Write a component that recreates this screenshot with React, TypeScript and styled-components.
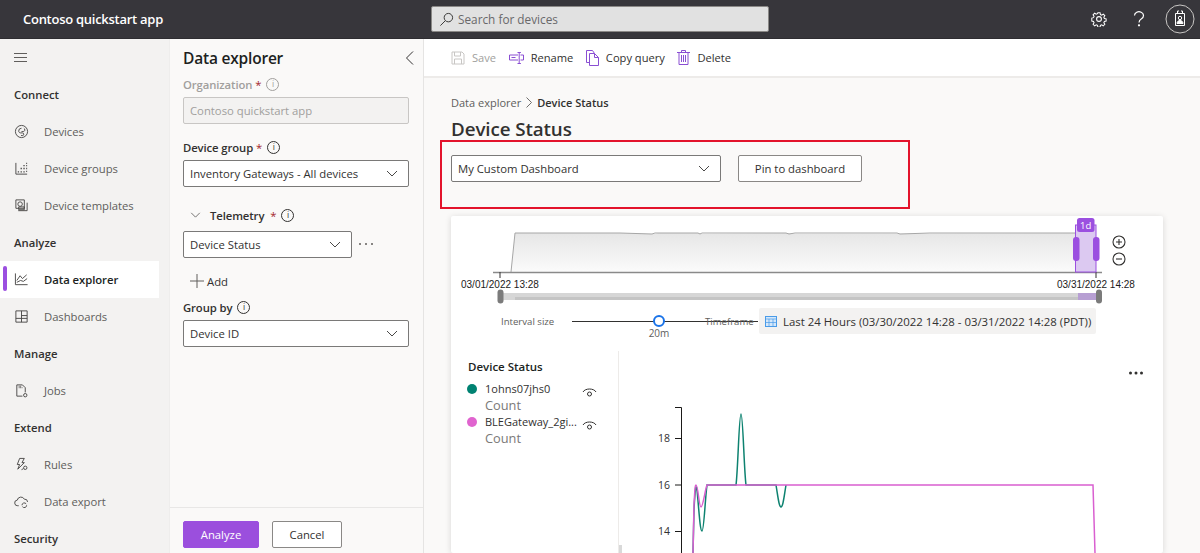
import React from "react";
import styled, { createGlobalStyle } from "styled-components";

const Global = createGlobalStyle`
  html, body { margin: 0; padding: 0; height: 553px; overflow: hidden; background: #faf9f8; }
  body { font-family: "Open Sans", "Noto Sans", "Liberation Sans", sans-serif; color: #323130; }
  * { box-sizing: border-box; }
`;

const Page = styled.div`
  width: 1200px; height: 553px; display: flex; flex-direction: column; overflow: hidden; position: relative;
`;
const Header = styled.header`
  height: 39px; flex: none; background: #37363b; display: flex; align-items: center; position: relative;
  border-bottom: 1px solid #2e2d31;
`;
const Brand = styled.div`
  width: 431px; padding-left: 23px; color: #fff; font-size: 13px; font-weight: 600; letter-spacing: -0.27px;
`;
const SearchBox = styled.div`
  width: 338px; height: 26px; background: #e1e1e1; border: 1px solid #8a8886; border-radius: 2px;
  display: flex; align-items: center; gap: 4px; padding-left: 7px; font-size: 11.8px; color: #69686a;
`;
const HeaderIcons = styled.div`
  margin-left: auto; display: flex; align-items: center; color: #fff; padding-right: 5px;
`;
const HeaderIcon = styled.span<{ $w: number }>`
  width: ${p => p.$w}px; display: flex; justify-content: center; align-items: center;
`;
const Body = styled.div`
  flex: 1; display: flex; min-height: 0;
`;
const Sidebar = styled.nav`
  width: 170px; flex: none; background: #f3f2f1; border-right: 1px solid #eeedec;
`;
const Hamburger = styled.div`
  height: 37px; padding-left: 14px; display: flex; align-items: center; color: #605e5c;
`;
const GroupTitle = styled.div`
  height: 37px; padding-left: 14px; display: flex; align-items: center; font-size: 11.3px; font-weight: 600; color: #323130;
`;
const NavRow = styled.div<{ $active?: boolean }>`
  height: 37px; width: 159px; display: flex; align-items: center; position: relative; padding-left: 14px; gap: 15px;
  font-size: 11.3px; letter-spacing: -0.05px; background: ${p => (p.$active ? "#fff" : "transparent")};
  color: ${p => (p.$active ? "#201f1e" : "#605e5c")}; font-weight: ${p => (p.$active ? 600 : 400)};
  &::before {
    content: ""; display: ${p => (p.$active ? "block" : "none")}; position: absolute; left: 3px; top: 5px; width: 4px; height: 25px;
    border-radius: 2px; background: #9b4fe0;
  }
`;
const NavIcon = styled.span`
  width: 15px; height: 15px; display: flex; color: #4a4948; flex: none;
`;
const Panel = styled.aside`
  width: 254px; flex: none; background: #faf9f8; border-right: 1px solid #e5e4e3; display: flex; flex-direction: column;
  padding-top: 6px;
`;
const PanelHead = styled.div`
  height: 26px; padding: 0 9px 0 13px; display: flex; justify-content: space-between; align-items: center;
  font-size: 15.5px; font-weight: 600; color: #201f1e; letter-spacing: -0.2px;
`;
const FieldLabel = styled.div<{ $top: number; $disabled?: boolean; $indent?: number }>`
  height: 16px; padding-bottom: 2px; margin-top: ${p => p.$top}px; margin-left: ${p => p.$indent ?? 13}px; display: flex; align-items: center; gap: 3px;
  font-size: 11.3px; font-weight: 600; letter-spacing: -0.1px; color: ${p => (p.$disabled ? "#a19f9d" : "#323130")};
`;
const Req = styled.span`
  color: #a4262c; font-weight: 400;
`;
const Info = styled.span<{ $disabled?: boolean }>`
  width: 13px; height: 13px; border-radius: 50%; border: 1px solid ${p => (p.$disabled ? "#a19f9d" : "#323130")};
  font-size: 8.5px; font-weight: 400; display: inline-flex; align-items: center; justify-content: center; margin-left: 2px;
  line-height: 1;
`;
const InputBox = styled.div`
  width: 226px; height: 27px; margin: 4px 0 0 13px; background: #f3f2f1; border: 1px solid #c8c6c4; border-radius: 2px;
  display: flex; align-items: center; padding-left: 6px; font-size: 11.3px; color: #a19f9d;
`;
const Select = styled.div<{ $w?: number; $mt?: number; $ml?: number }>`
  width: ${p => p.$w ?? 226}px; height: 27px; flex: none; margin: ${p => p.$mt ?? 4}px 0 0 ${p => p.$ml ?? 13}px; background: #fff;
  border: 1px solid #7a7978; border-radius: 2px; display: flex; align-items: center; justify-content: space-between;
  padding: 0 10px 0 6px; font-size: 11.3px; color: #323130;
`;
const TelemetrySelectRow = styled.div`
  display: flex; align-items: center; margin-top: 7px;
`;
const Dots = styled.span`
  margin-left: 7px; margin-top: -1px; width: 14px; display: flex; justify-content: space-between; color: #605e5c;
  & > i { width: 2px; height: 2px; background: currentColor; border-radius: 50%; }
`;
const AddRow = styled.div`
  height: 16px; margin: 15px 0 0 20px; display: flex; align-items: center; gap: 3px; font-size: 11.3px; color: #323130;
`;
const PanelFooter = styled.div`
  margin-top: auto; border-top: 1px solid #e8e7e6; padding: 13px 0 5px 13px; display: flex; gap: 13px;
`;
const Button = styled.button<{ $primary?: boolean; $w: number }>`
  width: ${p => p.$w}px; height: 27px; font: inherit; font-size: 11.3px; border-radius: 2px; padding: 0;
  border: 1px solid ${p => (p.$primary ? "#9b4fe0" : "#8a8886")}; background: ${p => (p.$primary ? "#9b4fdd" : "#fff")};
  color: ${p => (p.$primary ? "#fff" : "#323130")};
`;
const Main = styled.main`
  flex: 1; min-width: 0; display: flex; flex-direction: column; position: relative; background: #faf9f8;
`;
const Toolbar = styled.div`
  height: 39px; flex: none; background: #fff; border-bottom: 2px solid #edebe9; display: flex; align-items: center; padding-left: 27px; gap: 12.5px;
`;
const ToolItem = styled.span<{ $disabled?: boolean }>`
  display: flex; align-items: center; gap: 7px; font-size: 11.15px; color: ${p => (p.$disabled ? "#a19f9d" : "#323130")};
`;
const Content = styled.div`
  flex: 1; min-height: 0; padding: 17px 0 0 27px; display: flex; flex-direction: column;
`;
const Crumbs = styled.div`
  height: 16px; padding-bottom: 1px; display: flex; align-items: center; gap: 5px; font-size: 11px; color: #605e5c;
  & > b { color: #323130; font-weight: 600; }
`;
const PageTitle = styled.h1`
  margin: 4px 0 0; height: 28px; line-height: 28px; font-size: 18.8px; font-weight: 600; color: #323130; letter-spacing: -0.1px;
`;
const PinRow = styled.div`
  margin-top: 12px; display: flex; gap: 17px;
`;
const PinButton = styled.button`
  width: 124px; height: 27px; background: #fff; border: 1px solid #8a8886; border-radius: 2px; font: inherit; font-size: 11.3px; color: #323130; padding: 0;
`;
const Highlight = styled.div`
  position: absolute; left: 16px; top: 101px; width: 470px; height: 69px; border: 2px solid #e3132c; pointer-events: none;
`;
const Card = styled.section`
  margin-top: 34px; width: 712px; flex: 1; min-height: 0; background: #fff; box-shadow: 0 1px 6px rgba(0,0,0,.14); border-radius: 2px;
  display: flex; flex-direction: column; overflow: hidden;
`;
const Timeline = styled.svg`
  width: 712px; height: 92px; display: block; flex: none;
`;
const IntervalRow = styled.div`
  height: 26px; flex: none; display: flex; align-items: center; padding-left: 50px; font-size: 9.6px; color: #605e5c;
`;
const IntervalLabel = styled.span`
  width: 71px; flex: none;
`;
const SliderTrack = styled.div`
  width: 186px; height: 26px; flex: none; position: relative;
  &::before { content: ""; position: absolute; left: 0; right: 0; top: 13px; height: 1px; background: #323130; }
`;
const Thumb = styled.span`
  position: absolute; left: 81px; top: 7px; width: 12px; height: 12px; border-radius: 50%; background: #fff; border: 2px solid #1a73e8;
`;
const ThumbValue = styled.span`
  position: absolute; left: 76px; top: 18px; width: 22px; text-align: center; font-size: 10px; color: #605e5c;
`;
const TimeLabel = styled.span`
  margin-left: -53px; width: 54px; flex: none; position: relative;
`;
const Chip = styled.div`
  width: 337px; height: 26px; background: #f3f2f1; border-radius: 2px; display: flex; align-items: center; gap: 6px; padding-left: 6px;
  font-size: 11.4px; color: #323130; white-space: nowrap;
`;
const ChartRow = styled.div`
  flex: 1; min-height: 0; margin-top: 17px; display: flex;
`;
const Legend = styled.div`
  width: 168px; flex: none; border-right: 1px solid #edebe9; padding-top: 8px;
`;
const LegendTitle = styled.div`
  height: 16px; line-height: 16px; margin-left: 17px; font-size: 11.5px; font-weight: 600; color: #201f1e;
`;
const LegendItem = styled.div`
  margin-left: 16px; height: 33px; display: flex; align-items: flex-start; padding-top: 6px;
  &:first-of-type { margin-top: 0; }
`;
const Dot = styled.span<{ $c: string }>`
  width: 10px; height: 10px; border-radius: 50%; background: ${p => p.$c}; margin-top: 3px; flex: none;
`;
const LegendText = styled.div`
  width: 97px; margin-left: 8px; flex: none; font-size: 11px; line-height: 16px; color: #323130; white-space: nowrap;
  & > small { display: block; font-size: 12.8px; color: #7a7978; line-height: 17px; }
`;
const Eye = styled.svg`
  width: 15px; height: 11px; margin-top: 6px; flex: none;
`;
const Plot = styled.svg`
  width: 543px; height: 202px; display: block; flex: none;
`;
const Tick = styled.text`
  font-family: "Liberation Sans", Arial, sans-serif; font-size: 10px; fill: #1b1a19;
`;
const AxisText = styled.text`
  font-family: "Open Sans", sans-serif; font-size: 10.5px; fill: #323130;
`;
const BadgeText = styled.text`
  font-family: "Open Sans", sans-serif; font-size: 9.5px; fill: #fff;
`;

const I = ({ children, s = 15 }: { children: React.ReactNode; s?: number }) => (
  <svg width={s} height={s} viewBox="0 0 16 16" fill="none" stroke="currentColor" strokeWidth="1">{children}</svg>
);
const Chev = ({ w = 12 }: { w?: number }) => (
  <svg width={w} height="7" viewBox="0 0 12 7" fill="none" stroke="#4a4948" strokeWidth="1"><path d="M1 1l5 5 5-5" /></svg>
);

const icons = {
  devices: <I><circle cx="8" cy="8" r="6.5" /><path d="M8 4.5a3 3 0 0 0-3 3c0 1.2 1 2 2 2h2a1.4 1.4 0 0 1 0 2.8H7.5M10.5 4.5a2 2 0 0 1 1 2c0 1-.8 1.5-2 1.5H8" /></I>,
  groups: <I><path d="M2 2v12h12" /><path d="M4 11.5h1.4M7 11.5h1.4M10 11.5h1.4M13 2.5h1M13 5h1M13 8h1M13 11h1M10 8h1.4M10 5h1.4M7 8h1.4" strokeWidth="1.4" /></I>,
  templates: <I><path d="M2 11V2h9v9z" /><path d="M4.5 13.5H14V5" /><circle cx="6.5" cy="6.5" r="2.4" /><path d="M5 9.5h6v3H5z" /></I>,
  explorer: <I><path d="M1.5 1.5v12h13" /><path d="M3 9l3.5-5 2.5 3 4.5-4" /><path d="M3 11l4-2 3 1 4-3" /></I>,
  dashboards: <I><path d="M2 2h12v12H2zM2 10h12M8 2v12M8 7h6" /></I>,
  jobs: <I><path d="M3 14V2h6l3 3v5M3 14h6" /><path d="M5 3.5h3M5 5h4" strokeDasharray="1 .6" /><circle cx="12" cy="13" r="1.8" /></I>,
  rules: <I><path d="M6 1.5h5L8.5 6H11l-7 7 2-5H3.5z" /><circle cx="12" cy="11.5" r="1.8" /><path d="M8 13.5l2-1" /></I>,
  exportI: <I><path d="M5 12.5H4a3 3 0 0 1-.5-6 4 4 0 0 1 7.5-1 3.2 3.2 0 0 1 3.5 3" /><path d="M8.5 12a2.5 2.5 0 0 1 4.5-1.5M13.5 12A2.5 2.5 0 0 1 9 13.5" /></I>,
};

const Nav = ({ icon, children, active }: { icon: React.ReactNode; children: React.ReactNode; active?: boolean }) => (
  <NavRow $active={active}><NavIcon>{icon}</NavIcon><span>{children}</span></NavRow>
);

const Purple = "#8a4fd3";

const green = "M693 553 L694 510 C695 490 696 482 697 490 C699 510 700 531 702 531 C704 531 705 500 707 485 L736 485 C738 470 739 414 741 414 C743 414 744 470 746 485 L776 485 C778 497 779 507 781 507 C783 507 784 497 786 485";
const pink = "M693 553 L694 505 C695 488 695 485 696 485 C698 485 699 507 701 507 C703 507 705 490 707 485 L1093 485 L1095 553";

export default function App() {
  return (
    <Page>
      <Global />
      <Header>
        <Brand>Contoso quickstart app</Brand>
        <SearchBox>
          <svg width="15" height="15" viewBox="0 0 16 16" fill="none" stroke="#323130" strokeWidth="1"><circle cx="10" cy="6" r="4.5" /><path d="M6.7 9.3L1.5 14.5" /></svg>
          Search for devices
        </SearchBox>
        <HeaderIcons>
          <HeaderIcon $w={28}>
            <svg width="16" height="16" viewBox="0 0 16 16" fill="none" stroke="#fff" strokeWidth="1.1"><circle cx="8" cy="8" r="2.4" /><path d="M6.8 1.2h2.4l.4 2 1.4.6 1.7-1.1 1.7 1.7-1.1 1.7.6 1.4 1.9.4v2.4l-1.9.4-.6 1.4 1.1 1.7-1.7 1.7-1.7-1.1-1.4.6-.4 1.9H6.8l-.4-1.9-1.4-.6-1.7 1.1-1.7-1.7 1.1-1.7-.6-1.4-1.9-.4V7l1.9-.4.6-1.4-1.1-1.7 1.7-1.7L5 2.9l1.4-.6z" transform="translate(.6 .6) scale(.92)" /></svg>
          </HeaderIcon>
          <HeaderIcon $w={52}>
            <svg width="12" height="16" viewBox="0 0 12 16" fill="none" stroke="#fff" strokeWidth="1.2"><path d="M1.5 4.5a4.5 3.8 0 1 1 7 3.2c-1.6 1-2.5 1.6-2.5 3.8" /><circle cx="6" cy="14.3" r=".5" fill="#fff" /></svg>
          </HeaderIcon>
          <HeaderIcon $w={30}>
            <svg width="30" height="30" viewBox="0 0 30 30" fill="none" stroke="#fff" strokeWidth="1"><circle cx="15" cy="15" r="14" stroke="#c8c6c4" /><path d="M10.5 9.5h9v12h-9z" /><path d="M12.5 9.5V7h1.5M17.5 9.5V7H16" /><circle cx="15" cy="14" r="1.7" /><path d="M12 19.5c0-2 1.5-3 3-3s3 1 3 3z" fill="#fff" /></svg>
          </HeaderIcon>
        </HeaderIcons>
      </Header>
      <Body>
        <Sidebar>
          <Hamburger>
            <svg width="13" height="9" viewBox="0 0 13 9" stroke="#605e5c" strokeWidth="1"><path d="M0 .5h13M0 4.5h13M0 8.5h13" /></svg>
          </Hamburger>
          <GroupTitle>Connect</GroupTitle>
          <Nav icon={icons.devices}>Devices</Nav>
          <Nav icon={icons.groups}>Device groups</Nav>
          <Nav icon={icons.templates}>Device templates</Nav>
          <GroupTitle>Analyze</GroupTitle>
          <Nav icon={icons.explorer} active>Data explorer</Nav>
          <Nav icon={icons.dashboards}>Dashboards</Nav>
          <GroupTitle>Manage</GroupTitle>
          <Nav icon={icons.jobs}>Jobs</Nav>
          <GroupTitle>Extend</GroupTitle>
          <Nav icon={icons.rules}>Rules</Nav>
          <Nav icon={icons.exportI}>Data export</Nav>
          <GroupTitle>Security</GroupTitle>
        </Sidebar>
        <Panel>
          <PanelHead>
            Data explorer
            <svg width="9" height="14" viewBox="0 0 9 14" fill="none" stroke="#323130" strokeWidth="1"><path d="M8 .5L1.5 7 8 13.5" /></svg>
          </PanelHead>
          <FieldLabel $top={6} $disabled>Organization <Req>*</Req><Info $disabled>i</Info></FieldLabel>
          <InputBox>Contoso quickstart app</InputBox>
          <FieldLabel $top={16}>Device group <Req>*</Req><Info>i</Info></FieldLabel>
          <Select>Inventory Gateways - All devices<Chev /></Select>
          <FieldLabel $top={21} $indent={20}>
            <svg width="11" height="6" viewBox="0 0 12 7" fill="none" stroke="#605e5c" strokeWidth="1" style={{ marginRight: 6 }}><path d="M1 1l5 5 5-5" /></svg>
            Telemetry <Req style={{ marginLeft: 3 }}>*</Req><Info>i</Info>
          </FieldLabel>
          <TelemetrySelectRow>
            <Select $w={169} $mt={0}>Device Status<Chev /></Select>
            <Dots><i /><i /><i /></Dots>
          </TelemetrySelectRow>
          <AddRow>
            <svg width="14" height="14" viewBox="0 0 14 14" stroke="#605e5c" strokeWidth="1"><path d="M7 0v14M0 7h14" /></svg>
            Add
          </AddRow>
          <FieldLabel $top={11}>Group by<Info>i</Info></FieldLabel>
          <Select>Device ID<Chev /></Select>
          <PanelFooter>
            <Button $primary $w={76}>Analyze</Button>
            <Button $w={70}>Cancel</Button>
          </PanelFooter>
        </Panel>
        <Main>
          <Toolbar>
            <ToolItem $disabled>
              <svg width="14" height="14" viewBox="0 0 14 14" fill="none" stroke="#c8c6c4" strokeWidth="1"><path d="M1 1h10l2 2v10H1z" /><path d="M3.5 1v4h6V1M3.5 13V8h7v5" /></svg>
              Save
            </ToolItem>
            <ToolItem>
              <svg width="15" height="12" viewBox="0 0 15 12" fill="none" stroke={Purple} strokeWidth="1"><path d="M9 3H.5v5H9M11.5 3h3v5h-3" /><path d="M10.2 .5v11M8.5 .5h3.4M8.5 11.5h3.4" /><path d="M2.5 5.5h4" /></svg>
              Rename
            </ToolItem>
            <ToolItem>
              <svg width="13" height="16" viewBox="0 0 13 16" fill="none" stroke={Purple} strokeWidth="1"><path d="M3.5 12.5H.5V.5h6l2 3" /><path d="M3.5 3.5h5l4 4v8h-9z" /><path d="M8.5 3.5v4h4" /></svg>
              Copy query
            </ToolItem>
            <ToolItem>
              <svg width="13" height="15" viewBox="0 0 13 15" fill="none" stroke={Purple} strokeWidth="1"><path d="M0 2.5h13M2 2.5v12h9v-12M4.5 2.5V.5h4v2M4.5 5v7M6.5 5v7M8.5 5v7" /></svg>
              Delete
            </ToolItem>
          </Toolbar>
          <Content>
            <Crumbs>
              Data explorer
              <svg width="6" height="11" viewBox="0 0 6 11" fill="none" stroke="#605e5c" strokeWidth=".9"><path d="M.5.5l5 5-5 5" /></svg>
              <b>Device Status</b>
            </Crumbs>
            <PageTitle>Device Status</PageTitle>
            <PinRow>
              <Select $w={270} $mt={0} $ml={0}>My Custom Dashboard<Chev /></Select>
              <PinButton>Pin to dashboard</PinButton>
            </PinRow>
            <Card>
              <Timeline viewBox="451 216 712 92">
                <defs>
                  <linearGradient id="area" x1="0" y1="0" x2="0" y2="1">
                    <stop offset="0" stopColor="#e6e6e6" />
                    <stop offset="1" stopColor="#fbfbfb" />
                  </linearGradient>
                </defs>
                <path d="M511 272 L515 233 L620 233 L655 234 L658 233 L700 233 L702 234 L788 233 L795 234 L1075 233 L1075 272 Z" fill="url(#area)" />
                <path d="M511 272 L515 233 L620 233 L652 234 L655 233 L698 233 L700 234 L702 233 L786 233 L789 234 L795 233 L897 233 L900 234 L930 233 L1075 233" fill="none" stroke="#a6a6a6" strokeWidth="1" />
                <path d="M493 272.5 H1102" stroke="#8a8a8a" strokeWidth="1.4" />
                <path d="M500 272 v6 M1096 272 v6" stroke="#323130" strokeWidth="1" />
                <Tick x="461" y="288">03/01/2022 13:28</Tick>
                <Tick x="1057" y="288">03/31/2022 14:28</Tick>
                <rect x="500" y="293" width="598" height="7" fill="#d6d6d6" />
                <rect x="515" y="297" width="583" height="3" fill="#c4c4c4" />
                <rect x="1078" y="293" width="20" height="7" fill="#b79fd3" />
                <rect x="497.5" y="289.5" width="6" height="14" rx="3" fill="#7b7b7b" />
                <rect x="1096" y="289.5" width="6" height="14" rx="3" fill="#7b7b7b" />
                <rect x="1075.5" y="225" width="20.5" height="47" fill="#dcc9f1" stroke="#9b4fe0" strokeWidth="1" />
                <rect x="1077" y="218" width="17.5" height="14" rx="2.5" fill="#9b4fe0" />
                <BadgeText x="1085.7" y="229" textAnchor="middle">1d</BadgeText>
                <rect x="1073" y="237" width="6.5" height="24" rx="3" fill="#9b4fe0" />
                <rect x="1093" y="237" width="6.5" height="24" rx="3" fill="#9b4fe0" />
                <g fill="none" stroke="#323130" strokeWidth="1.1">
                  <circle cx="1119" cy="242" r="6" />
                  <path d="M1116 242h6M1119 239v6" />
                  <circle cx="1119" cy="259" r="6" />
                  <path d="M1116 259h6" />
                </g>
              </Timeline>
              <IntervalRow>
                <IntervalLabel>Interval size</IntervalLabel>
                <SliderTrack><Thumb /><ThumbValue>20m</ThumbValue></SliderTrack>
                <TimeLabel>Timeframe</TimeLabel>
                <Chip>
                  <svg width="12" height="12" viewBox="0 0 12 12" fill="#d5e8fb" stroke="#4a9be8" strokeWidth="1"><rect x=".5" y="1.5" width="11" height="10" /><path d="M.5 4h11M4 4v7.5M8 4v7.5M.5 7.5h11" strokeWidth=".7" /></svg>
                  Last 24 Hours (03/30/2022 14:28 - 03/31/2022 14:28 (PDT))
                </Chip>
              </IntervalRow>
              <ChartRow>
                <Legend>
                  <LegendTitle>Device Status</LegendTitle>
                  {[
                    { c: "#008272", n: "1ohns07jhs0" },
                    { c: "#e064cf", n: "BLEGateway_2gi..." },
                  ].map(it => (
                    <LegendItem key={it.n}>
                      <Dot $c={it.c} />
                      <LegendText>{it.n}<small>Count</small></LegendText>
                      <Eye viewBox="0 0 15 11" fill="none" stroke="#323130" strokeWidth="1">
                        <path d="M1 5C3 1 12 1 14 5" />
                        <circle cx="7.5" cy="7" r="2" />
                      </Eye>
                    </LegendItem>
                  ))}
                </Legend>
                <Plot viewBox="619 351 543 202">
                  <rect x="619" y="545" width="3" height="8" fill="#d9d9d9" />
                  <g fill="#323130">
                    <circle cx="1130.5" cy="373" r="1.5" />
                    <circle cx="1136" cy="373" r="1.5" />
                    <circle cx="1141.5" cy="373" r="1.5" />
                  </g>
                  <path d="M675 407.5 H681.5 V553 M675 438.5 H681 M675 485 H681 M675 531.5 H681" fill="none" stroke="#1b1a19" strokeWidth="1" />
                  <AxisText x="670" y="442" textAnchor="end">18</AxisText>
                  <AxisText x="670" y="489" textAnchor="end">16</AxisText>
                  <AxisText x="670" y="535" textAnchor="end">14</AxisText>
                  <path d={green} fill="none" stroke="#0d8270" strokeWidth="1.5" />
                  <path d={pink} fill="none" stroke="#d95fd0" strokeWidth="1.5" />
                </Plot>
              </ChartRow>
            </Card>
          </Content>
          <Highlight />
        </Main>
      </Body>
    </Page>
  );
}
